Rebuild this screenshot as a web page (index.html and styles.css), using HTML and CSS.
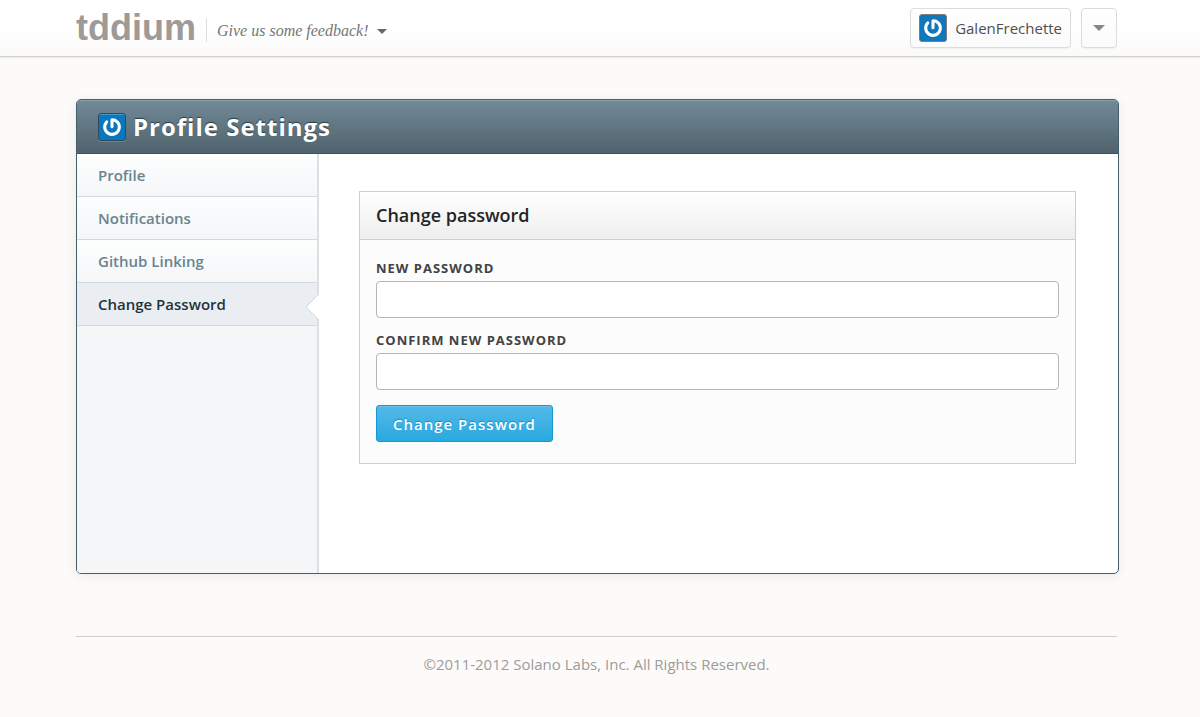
FILE: index.html
```html
<!DOCTYPE html>
<html lang="en">
<head>
<meta charset="utf-8">
<title>Profile Settings</title>
<meta name="viewport" content="width=device-width, initial-scale=1">
<link rel="stylesheet" href="styles.css">
</head>
<body>
<svg class="symbols" aria-hidden="true">
  <symbol id="power" viewBox="0 0 24 24">
    <path d="M12 11.6V4A8 8 0 1 1 6.300 6.400" fill="none" stroke="#fff" stroke-width="3.300" stroke-linecap="round" stroke-linejoin="round"/>
  </symbol>
</svg>
<header class="topbar">
  <div class="topbar-inner">
    <a class="logo" href="#">tddium</a>
    <button class="feedback" type="button">Give us some feedback!<span class="caret caret-feedback"></span></button>
    <a class="account" href="#">
      <svg class="avatar avatar-light"><use href="#power"/></svg>
      <span>GalenFrechette</span>
    </a>
    <button class="menu-button" type="button" aria-label="Account menu"><span class="caret"></span></button>
  </div>
</header>
<main class="page">
  <section class="panel">
    <div class="panel-header">
      <svg class="avatar avatar-dark"><use href="#power"/></svg>
      <h1>Profile Settings</h1>
    </div>
    <div class="panel-body">
      <nav class="sidebar">
        <a class="side-link" href="#">Profile</a>
        <a class="side-link" href="#">Notifications</a>
        <a class="side-link" href="#">Github Linking</a>
        <a class="side-link active" href="#" aria-current="page">Change Password
          <svg class="notch" viewBox="0 0 14 26" aria-hidden="true"><path d="M14 0L1 13L14 26Z" fill="#fff"/><path d="M13.500 0.500L1 13L13.500 25.500" fill="none" stroke="#cfd9df"/></svg>
        </a>
      </nav>
      <div class="content">
        <form class="card">
          <h2>Change password</h2>
          <div class="fields">
            <label for="new-password">New password</label>
            <input id="new-password" type="password">
            <label for="confirm-password">Confirm new password</label>
            <input id="confirm-password" type="password">
            <button class="submit" type="button">Change Password</button>
          </div>
        </form>
      </div>
    </div>
  </section>
  <footer class="footer">©2011-2012 Solano Labs, Inc. All Rights Reserved.</footer>
</main>
</body>
</html>
```
FILE: styles.css
```css
* { box-sizing: border-box; }

body {
  margin: 0;
  background: #fcfbf9;
  color: #242424;
  font-family: "Open Sans", "Noto Sans", sans-serif;
}

a { text-decoration: none; }

button { font-family: inherit; cursor: pointer; }

.symbols { position: absolute; width: 0; height: 0; }

.topbar {
  background: linear-gradient(#fff 50%, #fbfaf9);
  border-bottom: 1px solid #d2d2d2;
  box-shadow: 0 1px 2px #e9e8e7;
}

.topbar-inner {
  display: flex;
  align-items: center;
  height: 56px;
  padding: 0 83px 0 76px;
}

.logo {
  color: #9d9a98;
  font: bold 36px/40px "Liberation Sans", Arial, sans-serif;
}

.feedback {
  display: flex;
  align-items: center;
  gap: 9px;
  margin-top: 4px;
  margin-left: 10px;
  padding: 2px 0 0 10px;
  border: 0;
  border-left: 1px solid #dededc;
  background: none;
  color: #757776;
  font: italic 16px/22px "Liberation Serif", Georgia, serif;
}

.caret {
  display: block;
  border: 6px solid transparent;
  border-top-color: #868686;
  border-bottom-width: 0;
}

.caret-feedback { border-width: 5px 5px 0; border-top-color: #666; }

.account,
.menu-button {
  display: flex;
  align-items: center;
  justify-content: center;
  height: 40px;
  border: 1px solid #dcdcdc;
  border-radius: 4px;
  background: linear-gradient(#fff, #fbfbfb);
  box-shadow: 0 1px 1px #f0f0f0;
}

.account {
  gap: 8px;
  margin-left: auto;
  padding: 0 8px;
  color: #4f4f4f;
  font-size: 15px;
}

.menu-button { width: 36px; margin-left: 10px; padding: 0; }

.avatar {
  width: 28px;
  height: 28px;
  padding: 2px;
  border: 1px solid #7d7d7d;
  border-radius: 3px;
  background: #1177bb;
}

.avatar-dark {
  border-color: #2f4b5b;
  background: #0877bd;
  box-shadow: inset 0 1px #4595c8, 0 1px #71828c;
}

.page { padding: 42px 81px 40px 76px; }

.panel {
  border: 1px solid #465e6b;
  border-radius: 5px;
  background: #fff;
  box-shadow: 0 2px 12px rgba(60, 40, 30, 0.08);
  overflow: hidden;
}

.panel-header {
  display: flex;
  align-items: center;
  gap: 7px;
  height: 54px;
  padding: 0 21px;
  border-bottom: 1px solid #3c515e;
  background: linear-gradient(#718b97, #50626d);
  box-shadow: inset 0 1px #8ba0a9;
}

.panel-header h1 {
  margin: 0;
  color: #fff;
  font-size: 24px;
  font-weight: 700;
  letter-spacing: 1px;
  line-height: 32px;
  text-shadow: 0 -1px 1px #263c49;
}

.panel-body { display: flex; min-height: 419px; }

.sidebar {
  width: 242px;
  flex: none;
  border-right: 2px solid #dae1e5;
  background: #f4f6f8;
}

.side-link {
  display: block;
  position: relative;
  height: 43px;
  padding-left: 21px;
  border-bottom: 1px solid #cfdbe1;
  background: linear-gradient(#fdfefe, #f4f6f8);
  color: #6a838e;
  font-size: 15px;
  font-weight: 600;
  line-height: 42px;
}

.side-link.active { background: #eaeef2; color: #1f333e; }

.notch {
  position: absolute;
  top: 11px;
  right: -2px;
  width: 14px;
  height: 26px;
}

.content { flex: 1; padding: 37px 42px 40px 40px; }

.card {
  border: 1px solid #cecece;
  background: #fcfcfc;
}

.card h2 {
  margin: 0;
  padding: 0 16px;
  border-bottom: 1px solid #cecece;
  background: linear-gradient(#fff, #eee);
  font-size: 18px;
  font-weight: 600;
  line-height: 47px;
}

.fields { padding: 18px 16px 21px; }

.fields label {
  display: block;
  margin-bottom: 3px;
  color: #424242;
  font-size: 13px;
  font-weight: 700;
  letter-spacing: 1px;
  line-height: 20px;
  text-transform: uppercase;
}

.fields input {
  display: block;
  width: 100%;
  height: 37px;
  margin-bottom: 12px;
  padding: 0 10px;
  border: 1px solid #b5b5b5;
  border-radius: 4px;
  background: #fff;
  font: inherit;
}

.submit {
  height: 37px;
  margin-top: 3px;
  padding: 0 16px;
  border: 1px solid #1798d4;
  border-radius: 3px;
  background: linear-gradient(#54b9e7, #28a9e1);
  box-shadow: inset 0 1px #68c2eb;
  color: #fff;
  font-size: 15px;
  font-weight: 600;
  letter-spacing: 1px;
  text-shadow: 0 -1px 1px #168bc5;
}

.footer {
  margin: 62px 2px 0 0;
  padding-top: 17px;
  border-top: 1px solid #d0d0ce;
  color: #9c9c9c;
  font-size: 15px;
  line-height: 20px;
  text-align: center;
}
```
